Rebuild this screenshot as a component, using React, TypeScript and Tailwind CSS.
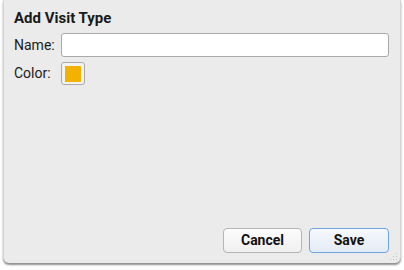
export default function App() {
    return (
        <div className="w-[404px] h-[270px] bg-white" style={{ fontFamily: 'Roboto, "Liberation Sans", sans-serif' }}>
            {/* dialog */}
            <div className="relative ml-[3px] w-[398px] h-[263px] bg-[#ebebeb] border-l border-r border-[#d6d6d6] rounded-b-[6px] shadow-[0_2px_2px_rgba(0,0,0,0.45)] flex flex-col pl-[10px] pr-[11px] pt-[8px] pb-[10px]">
                <h1 className="text-[15px] font-bold text-[#1a1a1a] leading-[20px]">Add Visit Type</h1>

                <div className="mt-[5px] flex items-center gap-[8px]">
                    <label className="text-[14px] text-[#1a1a1a] w-[39px]">Name:</label>
                    <input
                        type="text"
                        className="w-[328px] h-[24px] bg-white border border-[#a9a9a9] rounded-[3px] outline-none"
                    />
                </div>

                <div className="mt-[5px] flex items-center gap-[8px]">
                    <label className="text-[14px] text-[#1a1a1a] w-[39px]">Color:</label>
                    <button className="w-[24px] h-[23px] border border-[#a9a9a9] rounded-[3px] bg-[#f3f3f3] flex items-center justify-center">
                        <span className="block w-[16px] h-[16px] bg-[#f1b300]" />
                    </button>
                </div>

                <div className="mt-auto flex justify-end gap-[7px]">
                    <button className="w-[79px] h-[25px] rounded-[4px] border border-[#b5b5b5] bg-gradient-to-b from-[#fdfdfd] to-[#efefef] text-[14px] font-bold text-[#111]">
                        Cancel
                    </button>
                    <button className="w-[80px] h-[25px] rounded-[4px] border border-[#6ea4e4] bg-gradient-to-b from-[#f6f9fd] to-[#e3ebf5] text-[14px] font-bold text-[#111]">
                        Save
                    </button>
                </div>

                {/* resize grip */}
                <svg className="absolute right-[2px] bottom-[2px]" width="9" height="9" viewBox="0 0 9 9">
                    <g fill="#c4c4c4">
                        <rect x="7" y="1" width="1" height="1" />
                        <rect x="4" y="4" width="1" height="1" />
                        <rect x="7" y="4" width="1" height="1" />
                        <rect x="1" y="7" width="1" height="1" />
                        <rect x="4" y="7" width="1" height="1" />
                        <rect x="7" y="7" width="1" height="1" />
                    </g>
                </svg>
            </div>
        </div>
    )
}
